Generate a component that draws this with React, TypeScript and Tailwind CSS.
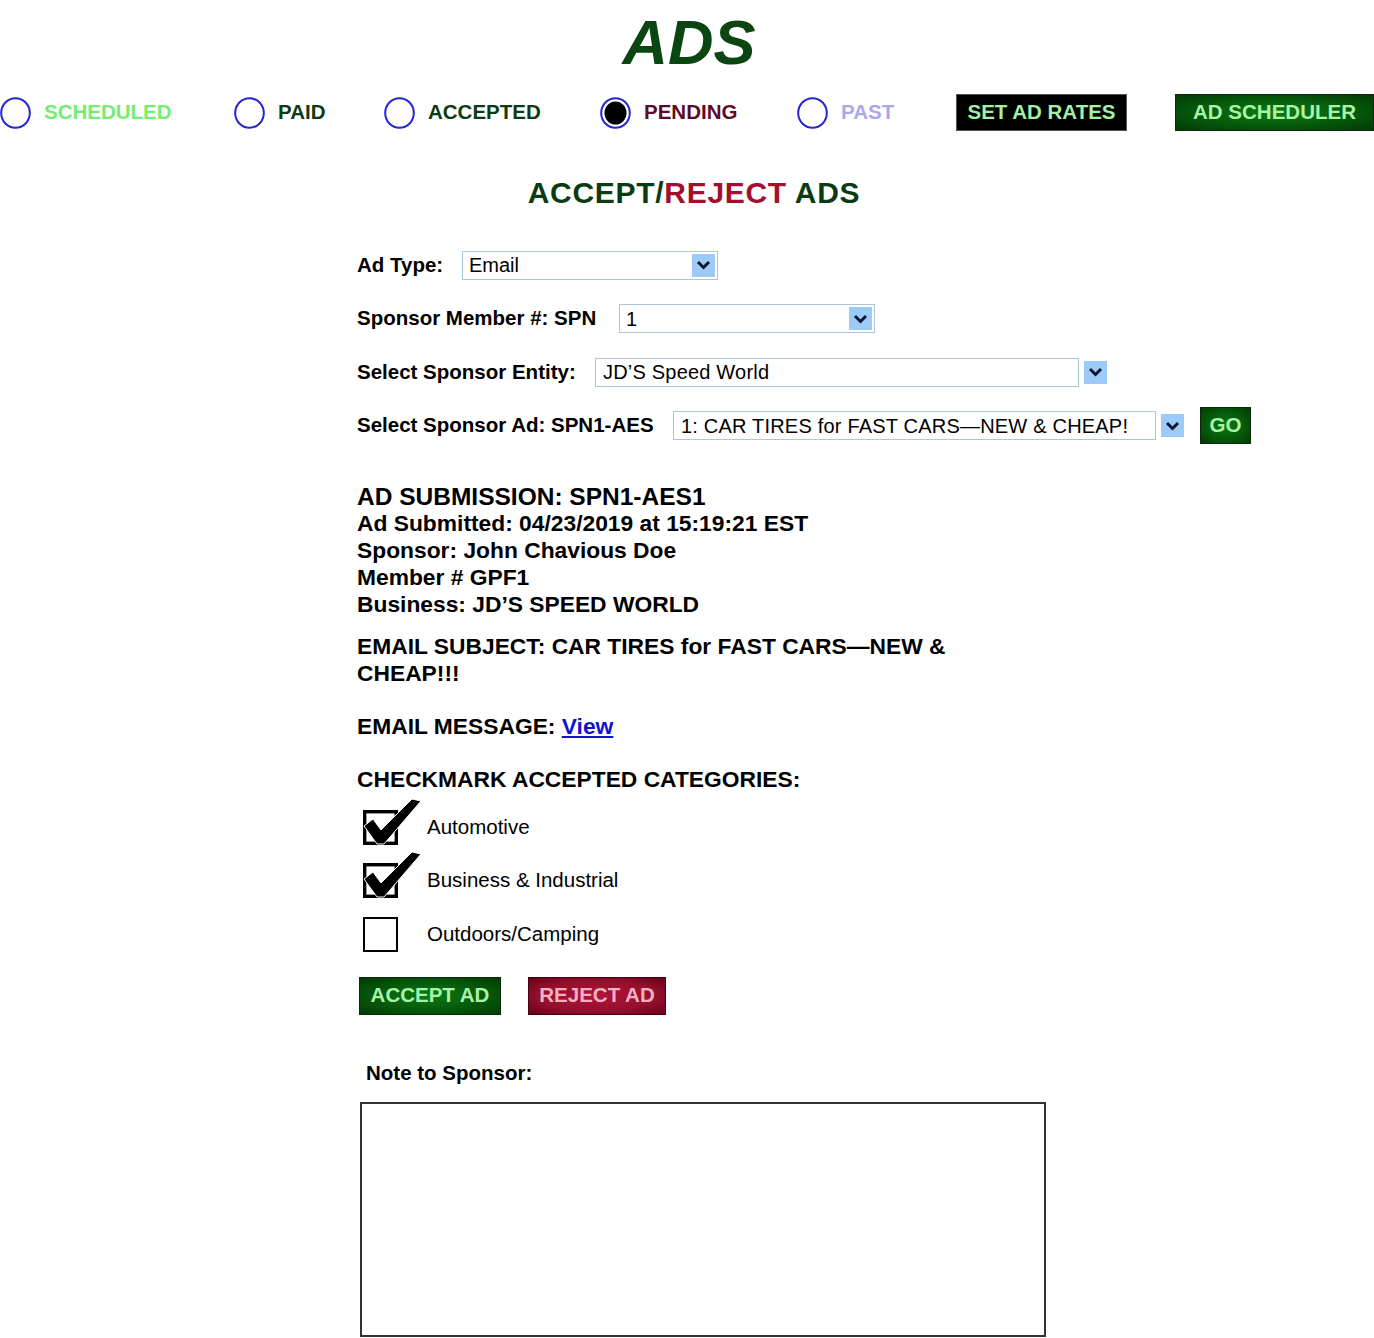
import React from 'react';

const font = { fontFamily: '"Liberation Sans", Arial, Helvetica, sans-serif' };

function Radio({ checked }: { checked?: boolean }) {
  return (
    <svg width="31" height="32" viewBox="0 0 31 32" className="shrink-0">
      <ellipse cx="15.5" cy="16" rx="14.3" ry="14.8" fill="white" stroke="#2626d2" strokeWidth="2" />
      {checked && <ellipse cx="15.5" cy="16" rx="11" ry="11.5" fill="#000" />}
    </svg>
  );
}

function NavItem({ label, color, width, checked }: { label: string; color: string; width: string; checked?: boolean }) {
  return (
    <div className={`flex items-center gap-[13px] ${width}`}>
      <Radio checked={checked} />
      <span className={`text-[20.5px] font-bold ${color}`}>{label}</span>
    </div>
  );
}

function Arrow() {
  return (
    <div className="flex h-[23px] w-[23px] shrink-0 items-center justify-center bg-[#9dcbf7]">
      <svg width="15" height="10" viewBox="0 0 15 10">
        <path d="M2 2 L7.5 7.5 L13 2" fill="none" stroke="#0f1530" strokeWidth="3" />
      </svg>
    </div>
  );
}

function Select({ value, width, inner }: { value: string; width: string; inner?: boolean }) {
  if (inner) {
    return (
      <div className={`flex h-[29px] items-center justify-between border border-[#a9c8de] pl-[6px] pr-[2px] font-normal ${width}`}>
        <span className="text-[20px] text-black">{value}</span>
        <Arrow />
      </div>
    );
  }
  return (
    <div className="flex items-center gap-[5px] font-normal">
      <div className={`flex h-[29px] items-center border border-[#a9c8de] pl-[7px] ${width}`}>
        <span className="text-[20px] tracking-[0.2px] text-black whitespace-nowrap">{value}</span>
      </div>
      <Arrow />
    </div>
  );
}

function CheckBox({ checked }: { checked?: boolean }) {
  if (!checked) {
    return <div className="h-[35px] w-[35px] border-2 border-black" />;
  }
  return (
    <svg width="58" height="35" viewBox="0 0 58 35" className="overflow-visible">
      <rect x="1.7" y="1.7" width="31.6" height="31.6" fill="none" stroke="#000" strokeWidth="3.4" />
      <polygon
        points="1,16 10,9 18,20 49,-11 58,-9 21,34 14,34"
        fill="#000"
        stroke="#fff"
        strokeWidth="1"
        strokeLinejoin="round"
      />
    </svg>
  );
}

const greenBtn =
  'flex items-center justify-center border border-[#0b2a0b] bg-[radial-gradient(ellipse_at_center,#0b7a12_0%,#05560a_60%,#023a05_100%)] text-[20.5px] font-bold text-[#a8f3a8]';

export default function App() {
  return (
    <div className="relative w-[1374px] bg-white text-black" style={font}>
      <h1 className="pt-[11px] pl-[4px] text-center text-[63px] font-bold italic leading-none text-[#0a4512]">ADS</h1>

      <div className="mt-[20px] flex h-[37px] items-center">
        <NavItem label="SCHEDULED" color="text-[#72ef72]" width="w-[234px]" />
        <NavItem label="PAID" color="text-[#0b3b12]" width="w-[150px]" />
        <NavItem label="ACCEPTED" color="text-[#0b3b12]" width="w-[216px]" />
        <NavItem label="PENDING" color="text-[#5e0a2c]" width="w-[197px]" checked />
        <NavItem label="PAST" color="text-[#a9a8ef]" width="w-[159px]" />
        <div className="flex h-[37px] w-[171px] items-center justify-center border border-[#555] bg-black text-[20.5px] font-bold text-[#a3f0a3]">
          SET AD RATES
        </div>
        <div className={`ml-[48px] h-[37px] w-[199px] ${greenBtn}`}>AD SCHEDULER</div>
      </div>

      <h2 className="mt-[47px] pl-[14px] text-center text-[30px] font-bold leading-none tracking-[0.7px] text-[#0b3b12]">
        ACCEPT/<span className="text-[#a3102f]">REJECT</span> ADS
      </h2>

      <div className="mt-[38px] flex flex-col gap-[15.5px] pl-[357px] text-[20.5px] font-bold">
        <div className="flex h-[38px] items-center">
          <span className="w-[105px]">Ad Type:</span>
          <Select value="Email" width="w-[256px]" inner />
        </div>
        <div className="flex h-[38px] items-center">
          <span className="w-[262px]">Sponsor Member #: SPN</span>
          <Select value="1" width="w-[256px]" inner />
        </div>
        <div className="flex h-[38px] items-center">
          <span className="w-[238px]">Select Sponsor Entity:</span>
          <Select value="JD’S Speed World" width="w-[484px]" />
        </div>
        <div className="flex h-[38px] items-center">
          <span className="w-[316px]">Select Sponsor Ad: SPN1-AES</span>
          <Select value="1: CAR TIRES for FAST CARS—NEW & CHEAP!" width="w-[483px]" />
          <div className={`ml-[16px] h-[37px] w-[51px] ${greenBtn}`}>GO</div>
        </div>
      </div>

      <div className="mt-[38px] pl-[357px] font-bold">
        <div className="text-[24.5px] leading-[27px]">AD SUBMISSION: SPN1-AES1</div>
        <div className="text-[22.8px] leading-[27px]">Ad Submitted: 04/23/2019 at 15:19:21 EST</div>
        <div className="text-[22.8px] leading-[27px]">Sponsor: John Chavious Doe</div>
        <div className="text-[22.8px] leading-[27px]">Member # GPF1</div>
        <div className="text-[22.8px] leading-[27px]">Business: JD’S SPEED WORLD</div>

        <p className="mt-[15px] w-[620px] text-[22.8px] leading-[27px]">
          EMAIL SUBJECT: CAR TIRES for FAST CARS—NEW &amp; CHEAP!!!
        </p>

        <p className="mt-[26px] text-[22.8px] leading-[27px]">
          EMAIL MESSAGE: <a href="#" className="text-[#1212cc] underline">View</a>
        </p>

        <p className="mt-[26px] text-[22.8px] leading-[27px]">CHECKMARK ACCEPTED CATEGORIES:</p>
      </div>

      <div className="mt-[17px] flex flex-col gap-[18.5px] pl-[363px] text-[20.5px]">
        <div className="flex h-[35px] items-center">
          <div className="w-[64px]">
            <CheckBox checked />
          </div>
          <span>Automotive</span>
        </div>
        <div className="flex h-[35px] items-center">
          <div className="w-[64px]">
            <CheckBox checked />
          </div>
          <span>Business &amp; Industrial</span>
        </div>
        <div className="flex h-[35px] items-center">
          <div className="w-[64px]">
            <CheckBox />
          </div>
          <span>Outdoors/Camping</span>
        </div>
      </div>

      <div className="mt-[25px] flex gap-[27px] pl-[359px]">
        <div className={`h-[38px] w-[142px] ${greenBtn}`}>ACCEPT AD</div>
        <div className="flex h-[38px] w-[138px] items-center justify-center border border-[#4a0010] bg-[radial-gradient(ellipse_at_center,#b3123a_0%,#93102c_60%,#6a0018_100%)] text-[20.5px] font-bold text-[#f4b0c0]">
          REJECT AD
        </div>
      </div>

      <div className="mt-[46px] pl-[366px] text-[20.5px] font-bold leading-[24px]">Note to Sponsor:</div>

      <div className="mt-[17px] pl-[360px]">
        <textarea className="block h-[235px] w-[686px] resize-none border-2 border-[#333] outline-none" />
      </div>
    </div>
  );
}
